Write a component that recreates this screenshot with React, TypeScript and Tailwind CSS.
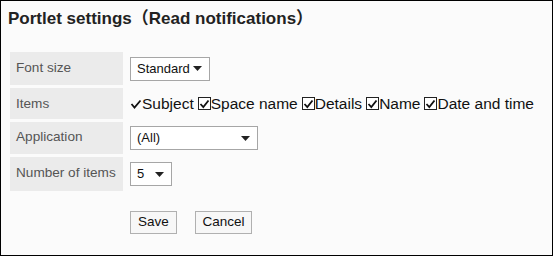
import React from "react";

const Arrow = () => (
  <svg width="9" height="5" viewBox="0 0 9 5" className="shrink-0">
    <path d="M0 0 L9 0 L4.5 5 Z" fill="#222" />
  </svg>
);

const CheckMark = () => (
  <svg width="12" height="10" viewBox="0 0 12 10" className="shrink-0">
    <path d="M1.5 5 L4.5 8.5 L10.5 1.5" fill="none" stroke="#111" strokeWidth="1.8" />
  </svg>
);

const Box = () => (
  <span className="inline-flex w-[13px] h-[13px] border border-[#222] bg-white items-center justify-center shrink-0">
    <svg width="11" height="10" viewBox="0 0 11 10">
      <path d="M1.5 5 L4.3 8 L9.5 1.5" fill="none" stroke="#111" strokeWidth="1.8" />
    </svg>
  </span>
);

function Select({ label, width }: { label: string; width: string }) {
  return (
    <div
      className={`flex items-center justify-between h-[24px] border border-[#a6a6a6] bg-white pl-[6px] pr-[7px] text-[13px] text-[#111] ${width}`}
    >
      <span>{label}</span>
      <Arrow />
    </div>
  );
}

export default function App() {
  return (
    <div
      className="w-[553px] h-[256px] border border-black bg-[#fbfbfb] text-[#222]"
      style={{ fontFamily: '"Liberation Sans", Arial, "Noto Sans CJK JP", sans-serif' }}
    >
      <div className="pl-[7px] pt-[8px] text-[17px] font-bold leading-[20px] text-[#222]">
        Portlet settings（Read notifications）
      </div>
      <div className="ml-[9px] mt-[23px] grid grid-cols-[113px_1fr] gap-x-[7px] gap-y-[3px]">
        <div className="h-[33px] bg-[#ebebeb] pl-[6px] pt-[6px] text-[13.6px] text-[#555]">Font size</div>
        <div className="flex items-center">
          <Select label="Standard" width="w-[80px]" />
        </div>

        <div className="h-[31px] bg-[#ebebeb] pl-[6px] pt-[6px] text-[13.6px] text-[#555]">Items</div>
        <div className="flex items-center text-[15.5px] text-[#111] whitespace-nowrap">
          <CheckMark />
          <span>Subject</span>
          <span className="ml-[4px]"><Box /></span>
          <span>Space name</span>
          <span className="ml-[4px]"><Box /></span>
          <span>Details</span>
          <span className="ml-[4px]"><Box /></span>
          <span>Name</span>
          <span className="ml-[4px]"><Box /></span>
          <span>Date and time</span>
        </div>

        <div className="h-[32px] bg-[#ebebeb] pl-[6px] pt-[5px] text-[13.6px] text-[#555]">Application</div>
        <div className="flex items-center">
          <Select label="(All)" width="w-[128px]" />
        </div>

        <div className="h-[34px] bg-[#ebebeb] pl-[6px] pt-[6px] text-[13.6px] text-[#555]">Number of items</div>
        <div className="flex items-center">
          <Select label="5" width="w-[42px]" />
        </div>
      </div>
      <div className="ml-[129px] mt-[20px] flex gap-[18px]">
        <button className="h-[23px] w-[47px] border border-[#b0b0b0] bg-[#f7f7f7] text-[13.5px] text-[#111]">
          Save
        </button>
        <button className="h-[23px] w-[57px] border border-[#b0b0b0] bg-[#f7f7f7] text-[13.5px] text-[#111]">
          Cancel
        </button>
      </div>
    </div>
  );
}
